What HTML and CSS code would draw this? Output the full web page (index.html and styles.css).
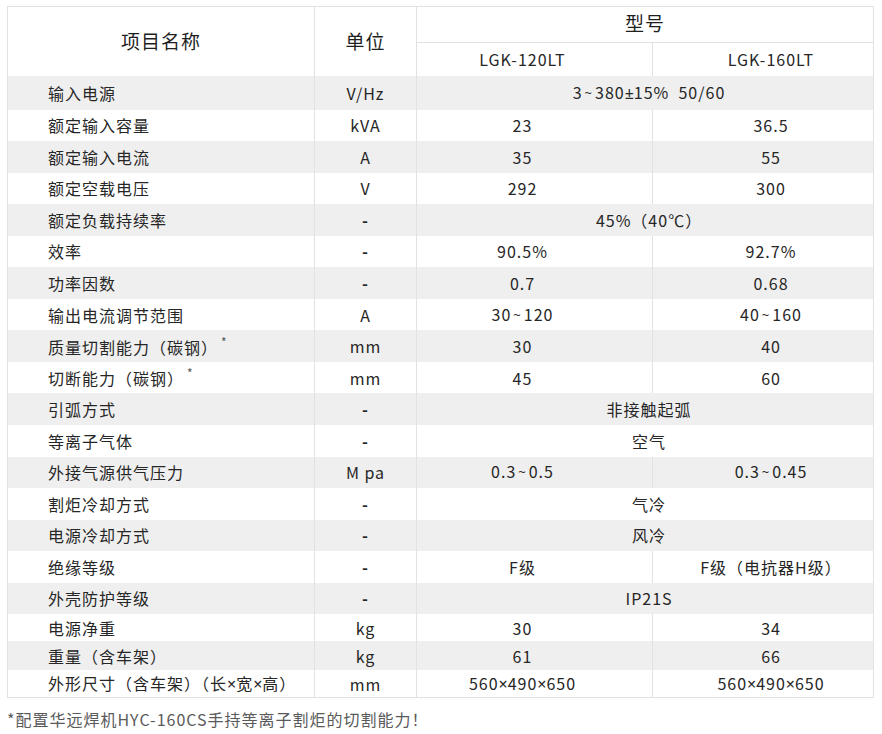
FILE: index.html
```html
<!DOCTYPE html>
<html lang="zh-CN">
<head>
<meta charset="utf-8">
<title>LGK 参数表</title>
<link rel="stylesheet" href="styles.css">
</head>
<body>
<div class="page">
  <table class="spec">
    <colgroup>
      <col class="c-name"><col class="c-unit"><col class="c-m1"><col class="c-m2">
    </colgroup>
    <thead>
      <tr class="h1">
        <th rowspan="2" class="big">项目名称</th>
        <th rowspan="2" class="big">单位</th>
        <th colspan="2" class="big top">型号</th>
      </tr>
      <tr class="h2">
        <th class="m1">LGK-120LT</th>
        <th class="m2">LGK-160LT</th>
      </tr>
    </thead>
    <tbody>
      <tr class="first"><td class="name">输入电源</td><td class="unit">V/Hz</td><td colspan="2" class="span">3<span class="tilde">~</span>380<span class="sym">±</span>15%&nbsp;&nbsp;50/60</td></tr>
      <tr><td class="name">额定输入容量</td><td class="unit">kVA</td><td class="m1">23</td><td class="m2">36.5</td></tr>
      <tr><td class="name">额定输入电流</td><td class="unit">A</td><td class="m1">35</td><td class="m2">55</td></tr>
      <tr><td class="name">额定空载电压</td><td class="unit">V</td><td class="m1">292</td><td class="m2">300</td></tr>
      <tr><td class="name">额定负载持续率</td><td class="unit dash">-</td><td colspan="2" class="span">45%（40℃）</td></tr>
      <tr><td class="name">效率</td><td class="unit dash">-</td><td class="m1">90.5%</td><td class="m2">92.7%</td></tr>
      <tr><td class="name">功率因数</td><td class="unit dash">-</td><td class="m1">0.7</td><td class="m2">0.68</td></tr>
      <tr><td class="name">输出电流调节范围</td><td class="unit">A</td><td class="m1">30<span class="tilde">~</span>120</td><td class="m2">40<span class="tilde">~</span>160</td></tr>
      <tr><td class="name">质量切割能力（碳钢）<span class="star">*</span></td><td class="unit">mm</td><td class="m1">30</td><td class="m2">40</td></tr>
      <tr><td class="name">切断能力（碳钢）<span class="star">*</span></td><td class="unit">mm</td><td class="m1">45</td><td class="m2">60</td></tr>
      <tr><td class="name">引弧方式</td><td class="unit dash">-</td><td colspan="2" class="span">非接触起弧</td></tr>
      <tr><td class="name">等离子气体</td><td class="unit dash">-</td><td colspan="2" class="span">空气</td></tr>
      <tr><td class="name">外接气源供气压力</td><td class="unit">M&nbsp;pa</td><td class="m1">0.3<span class="tilde">~</span>0.5</td><td class="m2">0.3<span class="tilde">~</span>0.45</td></tr>
      <tr><td class="name">割炬冷却方式</td><td class="unit dash">-</td><td colspan="2" class="span">气冷</td></tr>
      <tr><td class="name">电源冷却方式</td><td class="unit dash">-</td><td colspan="2" class="span">风冷</td></tr>
      <tr><td class="name">绝缘等级</td><td class="unit dash">-</td><td class="m1">F级</td><td class="m2">F级（电抗器H级）</td></tr>
      <tr><td class="name">外壳防护等级</td><td class="unit dash">-</td><td colspan="2" class="span">IP21S</td></tr>
      <tr class="r27"><td class="name">电源净重</td><td class="unit">kg</td><td class="m1">30</td><td class="m2">34</td></tr>
      <tr class="r29"><td class="name">重量（含车架）</td><td class="unit">kg</td><td class="m1">61</td><td class="m2">66</td></tr>
      <tr class="r26"><td class="name">外形尺寸（含车架）（长<span class="sym">×</span>宽<span class="sym">×</span>高）</td><td class="unit">mm</td><td class="m1">560<span class="sym">×</span>490<span class="sym">×</span>650</td><td class="m2">560<span class="sym">×</span>490<span class="sym">×</span>650</td></tr>
    </tbody>
  </table>
  <p class="note">*配置华远焊机HYC-160CS手持等离子割炬的切割能力！</p>
</div>
</body>
</html>
```

FILE: styles.css
```css
html, body {
  margin: 0;
  padding: 0;
  background: #ffffff;
}

body {
  font-family: "Noto Sans CJK SC", "Noto Sans", sans-serif;
  color: #262626;
}

.page {
  padding: 6px 9px 0 7px;
}

.spec {
  width: 866px;
  table-layout: fixed;
  border-collapse: collapse;
  border: 1px solid #e2e2e2;
  font-size: 16px;
  letter-spacing: 1px;
}

.c-name { width: 307px; }
.c-unit { width: 102px; }
.c-m1 { width: 236px; }
.c-m2 { width: 221px; }

.spec th,
.spec td {
  padding: 0;
  text-align: center;
  font-weight: normal;
  border-left: 1px solid #e2e2e2;
  border-right: 1px solid #e2e2e2;
  white-space: nowrap;
  line-height: 20px;
}

.spec th.big {
  font-size: 19px;
  color: #1f1f1f;
}

.h1 { height: 36px; }
.h2 { height: 33px; }

.h1 th.top {
  border-bottom: 1px solid #e2e2e2;
  padding-bottom: 3px;
}

.spec tbody tr { height: 31.56px; }
.spec tbody tr.first { height: 34px; }
.spec tbody tr.r27 { height: 27px; }
.spec tbody tr.r29 { height: 29px; }
.spec tbody tr.r26 { height: 27px; }

.spec tbody tr:nth-child(odd) { background: #efefef; }
.spec tbody tr:nth-child(even) { background: #ffffff; }

.spec td.name {
  text-align: left;
  padding-left: 40px;
}

.spec .m1 { padding-right: 24px; }
.spec .m2 { padding-left: 16px; }
.spec td.span { padding-left: 8px; }

.spec td.dash {
  font-weight: bold;
}

.sym {
  font-family: "Noto Sans", sans-serif;
  letter-spacing: 0;
}

.tilde {
  font-family: "Noto Sans", sans-serif;
  font-size: 13px;
  letter-spacing: 0;
  margin: 0 3px 0 2px;
  position: relative;
  top: -1px;
}

.star {
  display: inline-block;
  font-size: 12px;
  color: #555;
  vertical-align: 7px;
  line-height: 1;
  margin-left: 3px;
}

.note {
  margin: 10px 0 0 0;
  font-size: 16px;
  letter-spacing: 1px;
  color: #5a5a5a;
  line-height: 22px;
}
```
